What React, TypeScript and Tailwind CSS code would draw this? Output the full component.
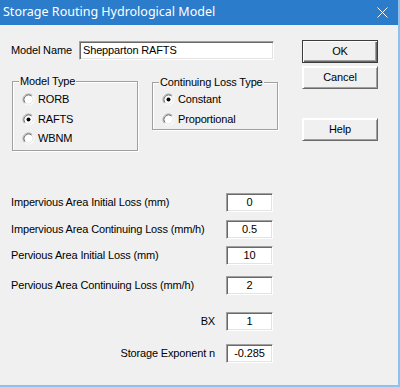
import React from "react";

const font = "font-['Liberation_Sans',Arial,sans-serif]";

function Radio({ checked }: { checked?: boolean }) {
  return (
    <svg width="13" height="13" viewBox="0 0 13 13" className="shrink-0">
      <circle cx="6.5" cy="6.5" r="5.5" fill="#ffffff" />
      <path d="M2.61 10.39 A5.5 5.5 0 0 1 10.39 2.61" fill="none" stroke="#a0a0a0" strokeWidth="1" />
      <path d="M10.39 2.61 A5.5 5.5 0 0 1 2.61 10.39" fill="none" stroke="#ffffff" strokeWidth="1" />
      <path d="M3.32 9.68 A4.5 4.5 0 0 1 9.68 3.32" fill="none" stroke="#696969" strokeWidth="1" />
      <path d="M9.68 3.32 A4.5 4.5 0 0 1 3.32 9.68" fill="none" stroke="#e3e3e3" strokeWidth="1" />
      {checked && <circle cx="6.5" cy="6.5" r="2" fill="#000000" />}
    </svg>
  );
}

function TextBox({ value, className, center }: { value: string; className?: string; center?: boolean }) {
  return (
    <div
      className={
        "h-[19px] bg-white border border-t-[#a0a0a0] border-l-[#a0a0a0] border-b-white border-r-white shadow-[inset_1px_1px_0_#696969,inset_-1px_-1px_0_#e3e3e3] flex items-center text-[11px] text-black " +
        (center ? "justify-center " : "pl-[3px] ") +
        (className ?? "")
      }
    >
      {value}
    </div>
  );
}

function Button({ label, primary, className }: { label: string; primary?: boolean; className?: string }) {
  return (
    <div
      className={
        "w-[76px] h-[23px] flex items-center justify-center text-[11px] text-black bg-[#f0f0f0] " +
        (primary
          ? "border border-[#3c3c3c] shadow-[inset_1px_1px_0_#ffffff,inset_-1px_-1px_0_#696969,inset_-2px_-2px_0_#a0a0a0] "
          : "border border-t-[#ffffff] border-l-[#ffffff] border-b-[#696969] border-r-[#696969] shadow-[inset_1px_1px_0_#ffffff,inset_-1px_-1px_0_#a0a0a0] ") +
        (className ?? "")
      }
    >
      {label}
    </div>
  );
}

function Group({ title, className, children }: { title: string; className?: string; children: React.ReactNode }) {
  return (
    <div
      className={
        "relative w-[126px] border border-[#a0a0a0] shadow-[1px_1px_0_#ffffff,inset_1px_1px_0_#ffffff] " +
        (className ?? "")
      }
    >
      <div className="absolute left-[6px] top-[-8px] bg-[#f0f0f0] px-[1px] text-[11px] leading-[14px] text-black">
        {title}
      </div>
      {children}
    </div>
  );
}

function RadioRow({ label, checked, className }: { label: string; checked?: boolean; className?: string }) {
  return (
    <div className={"flex items-center h-[14px] text-[11px] text-black " + (className ?? "")}>
      <Radio checked={checked} />
      <span className="ml-[3px]">{label}</span>
    </div>
  );
}

function FieldRow({ label, value, className }: { label: string; value: string; className?: string }) {
  return (
    <div className={"flex items-center w-[262px] h-[19px] " + (className ?? "")}>
      <span className="flex-1 text-[11px] text-black">{label}</span>
      <TextBox value={value} center className="w-[47px]" />
    </div>
  );
}

function RightRow({ label, value, className }: { label: string; value: string; className?: string }) {
  return (
    <div className={"flex items-center justify-end w-[262px] h-[19px] " + (className ?? "")}>
      <span className="text-[11px] text-black">{label}</span>
      <TextBox value={value} center className="w-[47px] ml-[11px]" />
    </div>
  );
}

export default function App() {
  return (
    <div className={"w-[400px] h-[387px] flex flex-col border-r-2 border-b-2 border-[#8cc2f0] bg-[#f0f0f0] " + font}>
      <div className="h-[25px] shrink-0 bg-[#2b7ccb] flex items-center justify-between pl-[3px] pr-[10px]">
        <span className="text-white text-[12.5px] font-['Noto_Sans',sans-serif] leading-none">
          Storage Routing Hydrological Model
        </span>
        <svg width="11" height="11" viewBox="0 0 11 11">
          <path d="M0.5 0.5 L10.5 10.5 M10.5 0.5 L0.5 10.5" stroke="#ffffff" strokeWidth="1" />
        </svg>
      </div>
      <div className="flex-1 pl-[11px] tracking-[-0.15px]">
        <div className="flex">
          <div className="flex flex-col w-[267px]">
            <div className="flex items-center h-[19px] mt-[16px]">
              <span className="w-[68px] text-[11px] text-black">Model Name</span>
              <TextBox value="Shepparton RAFTS" className="w-[195px]" />
            </div>
            <div className="flex items-start mt-[21px]">
              <Group title="Model Type" className="ml-[1px] h-[70px] pl-[9px] pt-[10px]">
                <RadioRow label="RORB" />
                <RadioRow label="RAFTS" checked className="mt-[6px]" />
                <RadioRow label="WBNM" className="mt-[5px]" />
              </Group>
              <Group title="Continuing Loss Type" className="ml-[14px] mt-[1px] h-[48px] pl-[9px] pt-[9px]">
                <RadioRow label="Constant" checked />
                <RadioRow label="Proportional" className="mt-[6px]" />
              </Group>
            </div>
          </div>
          <div className="flex flex-col ml-[24px]">
            <Button label="OK" primary className="mt-[15px]" />
            <Button label="Cancel" className="mt-[3px]" />
            <Button label="Help" className="mt-[29px]" />
          </div>
        </div>
        <div className="flex flex-col">
          <FieldRow label="Impervious Area Initial Loss (mm)" value="0" className="mt-[42px]" />
          <FieldRow label="Impervious Area Continuing Loss (mm/h)" value="0.5" className="mt-[8px]" />
          <FieldRow label="Pervious Area Initial Loss (mm)" value="10" className="mt-[7px]" />
          <FieldRow label="Pervious Area Continuing Loss (mm/h)" value="2" className="mt-[11px]" />
          <RightRow label="BX" value="1" className="mt-[17px]" />
          <RightRow label="Storage Exponent n" value="-0.285" className="mt-[13px]" />
        </div>
      </div>
    </div>
  );
}
